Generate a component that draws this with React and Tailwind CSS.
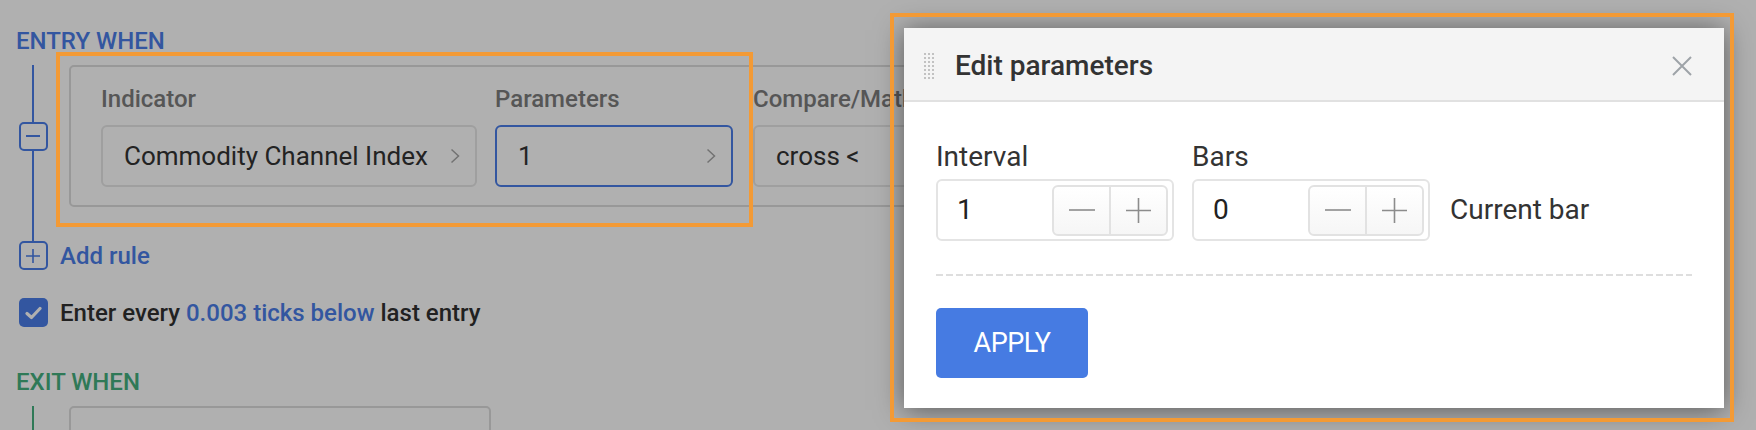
import React from 'react'

function Chevron() {
  return (
    <svg width="10" height="16" viewBox="0 0 10 16" fill="none" className="shrink-0">
      <path d="M1.5 1.5L8.5 8L1.5 14.5" stroke="#a6a6a6" strokeWidth="1.5" />
    </svg>
  )
}

function Select({ label, value, active, width }) {
  return (
    <div className={`shrink-0 ${width}`}>
      <div className="text-[24px] leading-[28px] font-medium text-[#7d7d7d] whitespace-nowrap">{label}</div>
      <div
        className={`mt-3 flex h-[62px] items-center justify-between rounded-[6px] border-2 bg-white pl-[21px] pr-[15px] text-[26px] text-[#333] ${
          active ? 'border-[#4a7de8]' : 'border-[#e6e6e6]'
        }`}
      >
        <span className="whitespace-nowrap">{value}</span>
        <Chevron />
      </div>
    </div>
  )
}

function Stepper() {
  return (
    <div className="flex h-[51px] w-[116px] rounded-[6px] border-2 border-[#e2e2e2] bg-gradient-to-b from-white to-[#f6f6f6]">
      <div className="flex flex-1 items-center justify-center">
        <svg width="26" height="26" viewBox="0 0 26 26">
          <path d="M0 13H26" stroke="#8c8c8c" strokeWidth="1.6" />
        </svg>
      </div>
      <div className="flex flex-1 items-center justify-center border-l-2 border-[#e2e2e2]">
        <svg width="25" height="25" viewBox="0 0 25 25">
          <path d="M0 12.5H25M12.5 0V25" stroke="#8c8c8c" strokeWidth="1.6" />
        </svg>
      </div>
    </div>
  )
}

function NumberField({ label, value }) {
  return (
    <div className="shrink-0">
      <div className="text-[28px] leading-[32px] text-[#333]">{label}</div>
      <div className="mt-[6px] flex h-[62px] w-[238px] items-center justify-between rounded-[6px] border-2 border-[#e4e4e4] pl-[19px] pr-[4px]">
        <span className="text-[28px] text-[#222]">{value}</span>
        <Stepper />
      </div>
    </div>
  )
}

function DragHandle() {
  return (
    <div className="grid grid-cols-3 gap-[2px]">
      {Array.from({ length: 21 }).map((_, i) => (
        <span key={i} className="h-[2px] w-[2px] bg-[#c2c2c2]" />
      ))}
    </div>
  )
}

export default function App() {
  return (
    <div className="relative h-[430px] w-[1756px] overflow-hidden bg-white font-[Roboto,sans-serif]">
      {/* page */}
      <div className="pl-4 pt-[27px]">
        <h2 className="text-[24px] leading-[28px] font-medium text-[#4a7de8]">ENTRY WHEN</h2>

        <div className="mt-[10px] flex">
          <div className="flex w-[34px] shrink-0 flex-col items-center">
            <div className="w-[2px] flex-1 bg-[#4a7de8]" />
            <div className="flex h-[29px] w-[29px] items-center justify-center rounded-[5px] border-2 border-[#4a7de8] bg-white">
              <div className="h-[2px] w-[14px] bg-[#4a7de8]" />
            </div>
            <div className="w-[2px] flex-1 bg-[#4a7de8]" />
          </div>
          <div className="ml-[19px] flex w-[1300px] shrink-0 gap-[18px] rounded-[5px] border-2 border-[#dcdcdc] bg-white pb-[18px] pl-[30px] pt-[18px]">
            <Select label="Indicator" value="Commodity Channel Index" width="w-[376px]" />
            <Select label="Parameters" value="1" active width="w-[238px]" />
            <div className="ml-[2px] shrink-0">
              <Select label="Compare/Math" value="cross <" width="w-[238px]" />
            </div>
          </div>
        </div>

        <div className="flex w-[34px] justify-center">
          <div className="h-[34px] w-[2px] bg-[#4a7de8]" />
        </div>

        <div className="flex h-[29px] items-center">
          <div className="flex w-[34px] justify-center">
            <div className="flex h-[29px] w-[29px] items-center justify-center rounded-[5px] border-2 border-[#4a7de8]">
              <svg width="14" height="14" viewBox="0 0 14 14">
                <path d="M0 7H14M7 0V14" stroke="#4a7de8" strokeWidth="1.6" />
              </svg>
            </div>
          </div>
          <span className="ml-[10px] text-[24px] font-medium text-[#4a7de8]">Add rule</span>
        </div>

        <div className="mt-[28px] flex h-[29px] items-center">
          <div className="flex w-[34px] justify-center">
            <div className="flex h-[29px] w-[29px] items-center justify-center rounded-[5px] bg-[#4a7de8]">
              <svg width="17" height="14" viewBox="0 0 17 14" fill="none">
                <path d="M2 7.5L6.5 11.5L15 2.5" stroke="white" strokeWidth="3.2" strokeLinecap="round" strokeLinejoin="round" />
              </svg>
            </div>
          </div>
          <span className="ml-[10px] text-[24px] font-medium text-[#313131] whitespace-nowrap">
            Enter every <span className="text-[#4a7de8]">0.003 ticks below</span> last entry
          </span>
        </div>

        <h2 className="mt-[41px] text-[24px] leading-[28px] font-medium text-[#44b07e]">EXIT WHEN</h2>

        <div className="mt-[10px] flex">
          <div className="flex w-[34px] flex-col items-center">
            <div className="h-[120px] w-[2px] bg-[#44b07e]" />
          </div>
          <div className="ml-[19px] h-[140px] w-[422px] rounded-[5px] border-2 border-[#dcdcdc] bg-white pl-[30px] pt-[18px]">
            <div className="text-[24px] leading-[28px] font-medium text-[#7d7d7d]">Indicator</div>
          </div>
        </div>
      </div>

      {/* backdrop */}
      <div className="absolute inset-0 bg-[rgba(0,0,0,0.31)]" />

      {/* dialog */}
      <div className="absolute left-[904px] top-[28px] h-[380px] w-[820px] bg-white shadow-[0_2px_26px_rgba(0,0,0,0.5)]">
        <div className="flex h-[74px] items-center border-b-2 border-[#e1e1e1] bg-[#f4f4f4] pl-[20px] pr-[32px] pt-[3px]">
          <DragHandle />
          <h3 className="ml-[21px] flex-1 text-[28px] font-medium text-[#333]">Edit parameters</h3>
          <svg width="20" height="20" viewBox="0 0 20 20">
            <path d="M1 1L19 19M19 1L1 19" stroke="#9ea3a8" strokeWidth="2" />
          </svg>
        </div>
        <div className="px-[32px] pb-[30px] pt-[39px]">
          <div className="flex items-end">
            <NumberField label="Interval" value="1" />
            <div className="ml-[18px]">
              <NumberField label="Bars" value="0" />
            </div>
            <div className="ml-[20px] flex h-[62px] items-center text-[28px] text-[#333]">Current bar</div>
          </div>
          <div className="mt-[33px] h-[2px] bg-[repeating-linear-gradient(90deg,#dedede_0_7px,transparent_7px_10px)]" />
          <button className="mt-[32px] flex h-[70px] w-[152px] items-center justify-center rounded-[5px] bg-[#467be2] text-[27px] tracking-[-0.5px] text-white">
            APPLY
          </button>
        </div>
      </div>

      {/* highlight annotations */}
      <div className="pointer-events-none absolute left-[56px] top-[52px] h-[175px] w-[697px] border-4 border-[#f39a35]" />
      <div className="pointer-events-none absolute left-[890px] top-[13px] h-[409px] w-[844px] border-4 border-[#f39a35]" />
    </div>
  )
}
